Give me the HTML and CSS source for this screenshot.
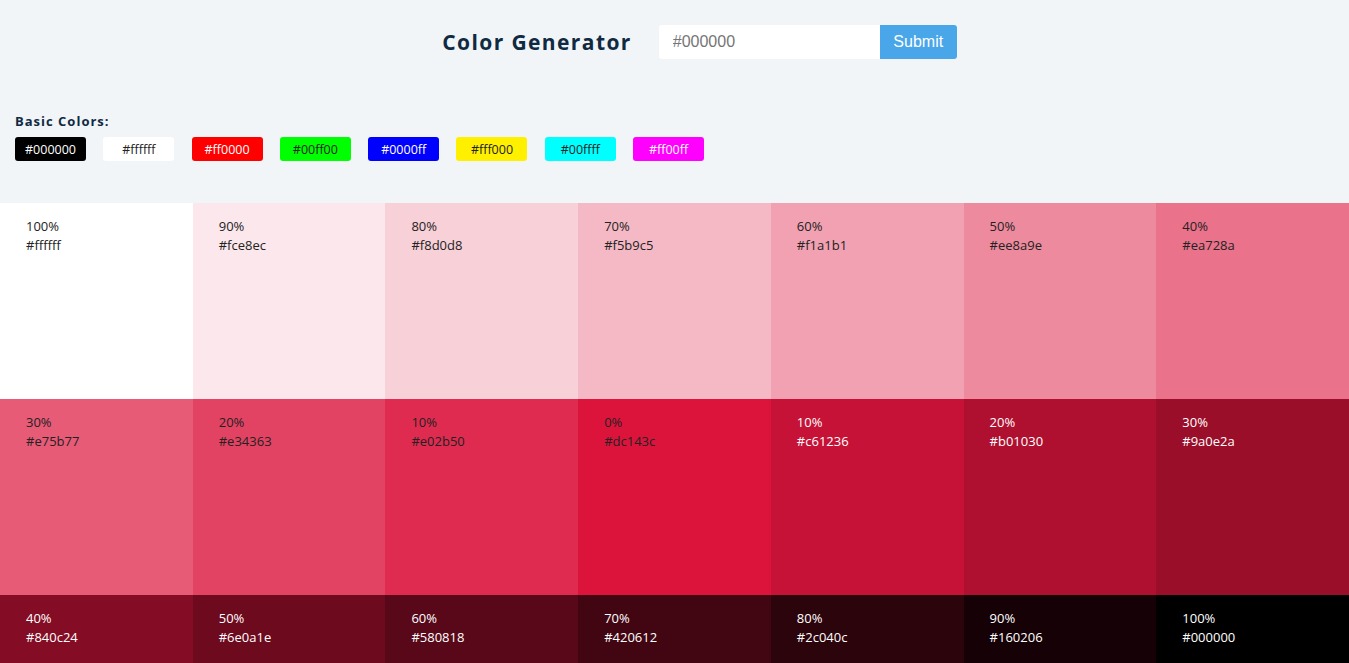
FILE: index.html
```html
<!DOCTYPE html>
<html lang="en">
<head>
<meta charset="utf-8">
<title>Color Generator</title>
<link rel="stylesheet" href="styles.css">
</head>
<body>
<section class="header">
  <h3 class="title">Color Generator</h3>
  <form class="form">
    <input class="input" type="text" placeholder="#000000">
    <button class="submit" type="button">Submit</button>
  </form>
</section>
<section class="basic">
  <h4 class="basic-title">Basic Colors:</h4>
  <div class="basic-list">
    <span class="chip light-text" style="background:#000000">#000000</span>
    <span class="chip" style="background:#ffffff">#ffffff</span>
    <span class="chip light-text" style="background:#ff0000">#ff0000</span>
    <span class="chip" style="background:#00ff00">#00ff00</span>
    <span class="chip light-text" style="background:#0000ff">#0000ff</span>
    <span class="chip" style="background:#fff000">#fff000</span>
    <span class="chip" style="background:#00ffff">#00ffff</span>
    <span class="chip light-text" style="background:#ff00ff">#ff00ff</span>
  </div>
</section>
<section class="colors">
  <article class="color" style="background:#ffffff"><p class="percent">100%</p><p class="hex">#ffffff</p></article>
  <article class="color" style="background:#fce8ec"><p class="percent">90%</p><p class="hex">#fce8ec</p></article>
  <article class="color" style="background:#f8d0d8"><p class="percent">80%</p><p class="hex">#f8d0d8</p></article>
  <article class="color" style="background:#f5b9c5"><p class="percent">70%</p><p class="hex">#f5b9c5</p></article>
  <article class="color" style="background:#f1a1b1"><p class="percent">60%</p><p class="hex">#f1a1b1</p></article>
  <article class="color" style="background:#ee8a9e"><p class="percent">50%</p><p class="hex">#ee8a9e</p></article>
  <article class="color" style="background:#ea728a"><p class="percent">40%</p><p class="hex">#ea728a</p></article>
  <article class="color" style="background:#e75b77"><p class="percent">30%</p><p class="hex">#e75b77</p></article>
  <article class="color" style="background:#e34363"><p class="percent">20%</p><p class="hex">#e34363</p></article>
  <article class="color" style="background:#e02b50"><p class="percent">10%</p><p class="hex">#e02b50</p></article>
  <article class="color" style="background:#dc143c"><p class="percent">0%</p><p class="hex">#dc143c</p></article>
  <article class="color color-light" style="background:#c61236"><p class="percent">10%</p><p class="hex">#c61236</p></article>
  <article class="color color-light" style="background:#b01030"><p class="percent">20%</p><p class="hex">#b01030</p></article>
  <article class="color color-light" style="background:#9a0e2a"><p class="percent">30%</p><p class="hex">#9a0e2a</p></article>
  <article class="color color-light" style="background:#840c24"><p class="percent">40%</p><p class="hex">#840c24</p></article>
  <article class="color color-light" style="background:#6e0a1e"><p class="percent">50%</p><p class="hex">#6e0a1e</p></article>
  <article class="color color-light" style="background:#580818"><p class="percent">60%</p><p class="hex">#580818</p></article>
  <article class="color color-light" style="background:#420612"><p class="percent">70%</p><p class="hex">#420612</p></article>
  <article class="color color-light" style="background:#2c040c"><p class="percent">80%</p><p class="hex">#2c040c</p></article>
  <article class="color color-light" style="background:#160206"><p class="percent">90%</p><p class="hex">#160206</p></article>
  <article class="color color-light" style="background:#000000"><p class="percent">100%</p><p class="hex">#000000</p></article>
</section>
</body>
</html>
```
FILE: styles.css
```css
html {
  scrollbar-width: none;
}
html::-webkit-scrollbar,
body::-webkit-scrollbar {
  display: none;
}
* {
  box-sizing: border-box;
}
body {
  margin: 0;
  background: #f1f5f8;
  color: #102a42;
  font-family: "Open Sans", "Noto Sans", sans-serif;
}
.header {
  display: flex;
  align-items: center;
  justify-content: center;
  padding: 25px 0 0 50px;
  height: 59px;
}
.title {
  margin: 0 27px 0 0;
  font-size: 21px;
  line-height: 28px;
  font-weight: 700;
  letter-spacing: 1.4px;
  color: #102a42;
}
.form {
  display: flex;
  margin: 0;
}
.input {
  width: 221px;
  height: 34px;
  border: none;
  border-radius: 3px 0 0 3px;
  padding: 0 14px;
  font-family: "Liberation Sans", Arial, sans-serif;
  font-size: 16px;
  background: #fff;
  color: #222;
  outline: none;
}
.input::placeholder {
  color: #757575;
}
.submit {
  width: 77px;
  height: 34px;
  border: none;
  border-radius: 0 3px 3px 0;
  background: #49a6e9;
  color: #fff;
  font-family: "Liberation Sans", Arial, sans-serif;
  font-size: 16px;
  padding: 0;
}
.basic {
  padding: 0 15px;
  height: 144px;
}
.basic-title {
  margin: 0;
  padding-top: 53px;
  font-size: 13px;
  line-height: 18px;
  font-weight: 700;
  letter-spacing: 1px;
  color: #102a42;
}
.basic-list {
  display: flex;
  gap: 17.3px;
  margin-top: 7px;
}
.chip {
  width: 71px;
  height: 24px;
  border-radius: 3px;
  display: flex;
  align-items: center;
  justify-content: center;
  font-size: 12.5px;
  color: #222;
}
.chip.light-text {
  color: #fff;
}
.colors {
  display: grid;
  grid-template-columns: repeat(7, 1fr);
  grid-auto-rows: 196px;
}
.color {
  padding: 14px 26px;
  color: #222;
  font-size: 13px;
  line-height: 19px;
}
.color-light {
  color: #fff;
}
.percent,
.hex {
  margin: 0;
}
```
